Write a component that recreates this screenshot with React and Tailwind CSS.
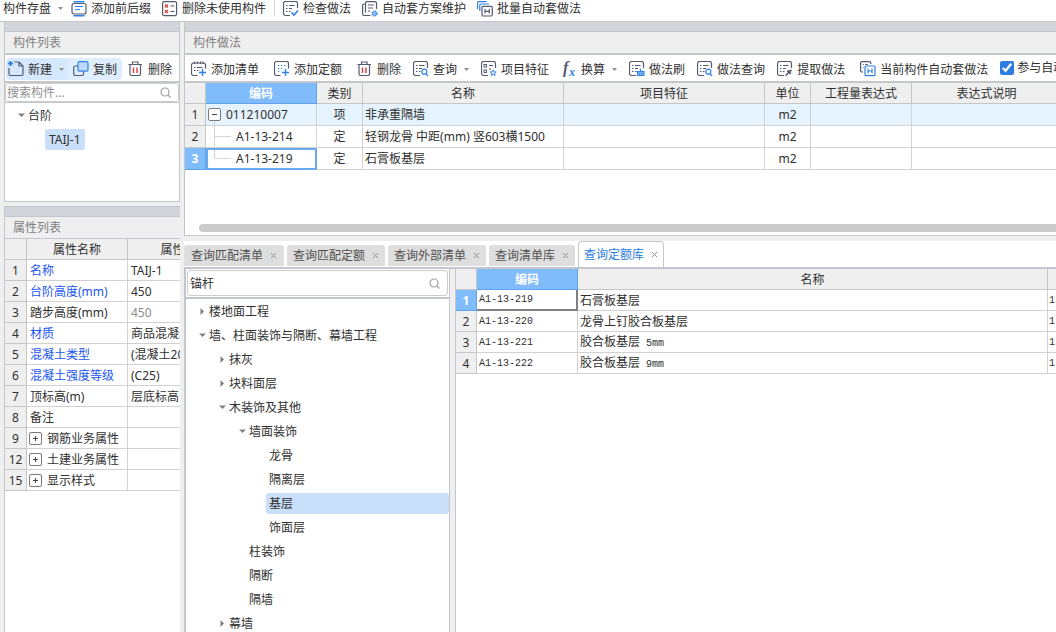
import React from 'react'
import clsx from 'clsx'

const DARK = '#555a70'
const BLUE = '#2f80e8'
const RED = '#e03a3a'

const Icon = ({ children }) => (
  <svg width="16" height="16" viewBox="0 0 16 16" fill="none" stroke={DARK} strokeWidth="1.2" className="shrink-0" aria-hidden="true">
    {children}
  </svg>
)

const sheet = 'M7 14.5H2.5a2 2 0 0 1-2-2V2.5a2 2 0 0 1 2-2h10a2 2 0 0 1 2 2V7'
const sheetLines = 'M3 4.5h1.500M6 4.5h5.500M3 7.5h1.500M6 7.5h3M3 10.5h1.500M6 10.5h1.500'

const icons = {
  affix: (
    <Icon>
      <path d="M3 2.500h10a2 2 0 0 1 2 2v6.500a2 2 0 0 1-2 2H3a2 2 0 0 1-2-2V4.500a2 2 0 0 1 2-2z" />
      <path d="M2.500 .700h11M2.500 14.800h11" stroke={BLUE} strokeWidth="1.400" />
      <path d="M4 5.500h8M4 8.500h5" stroke={BLUE} strokeWidth="1" />
    </Icon>
  ),
  unused: (
    <Icon>
      <rect x=".600" y=".600" width="14" height="14" rx="1.500" />
      <path d="M3 3.500l3 3m0-3l-3 3M3 9l3 3m0-3l-3 3" stroke={RED} />
      <path d="M8.500 5h4M8.500 10.500h4" />
    </Icon>
  ),
  check: (
    <Icon>
      <path d={sheet} />
      <path d={sheetLines} strokeWidth="1" />
      <path d="M8.500 11.500l2.500 2.500 4-4.500" stroke={BLUE} strokeWidth="1.600" />
    </Icon>
  ),
  scheme: (
    <Icon>
      <path d="M3.500 11.500V2A1.500 1.500 0 0 1 5 .600h8A1.500 1.500 0 0 1 14.500 2v6M3.500 3H2A1.500 1.500 0 0 0 .600 4.500V13A1.500 1.500 0 0 0 2 14.500h6.500" />
      <path d="M6 4h6M6 7h5M6 10h2" strokeWidth="1" />
      <circle cx="12.500" cy="12.500" r="2.500" fill="#8dbbf5" stroke={BLUE} strokeDasharray="1.200 .800" />
    </Icon>
  ),
  batch: (
    <Icon>
      <path d="M.600 8V2A1.300 1.300 0 0 1 1.900.700H9.500M2.800 10V4.300A1.300 1.300 0 0 1 4.100 3H12" stroke={BLUE} />
      <rect x="5" y="5.300" width="10.300" height="9.700" rx="1.200" />
      <path d="M8 8v4.500M12.300 8v4.500M8 10.300h4.300" />
    </Icon>
  ),
  create: (
    <Icon>
      <path d="M6.500 1H11l4 4v8a1.500 1.500 0 0 1-1.500 1.500h-11A1.500 1.500 0 0 1 1 13V7M11 1v4h4" />
      <path d="M.500 .500l4 4M4.500 .500l-4 4M2.500 0v5M0 2.500h5" stroke={BLUE} strokeWidth="1" />
    </Icon>
  ),
  copy: (
    <Icon>
      <path d="M5 5H2.200A1.500 1.500 0 0 0 .700 6.500V13A1.500 1.500 0 0 0 2.200 14.500H9A1.500 1.500 0 0 0 10.500 13V10.500" />
      <rect x="5" y=".700" width="10" height="9.500" rx="1.500" fill="#bcd8fb" stroke={BLUE} />
    </Icon>
  ),
  trash: (
    <Icon>
      <path d="M.500 3.500h13.500M4.500 3.500V1h5.500v2.500M2 3.500V13a1.500 1.500 0 0 0 1.500 1.500h7.500a1.500 1.500 0 0 0 1.500-1.500V3.500" />
      <path d="M5.500 6.500v5.500M9 6.500v5.500" stroke={RED} strokeWidth="1.400" />
    </Icon>
  ),
  addList: (
    <Icon>
      <path d="M6.500 14.500h-4a2 2 0 0 1-2-2V4a2 2 0 0 1 2-2h10a2 2 0 0 1 2 2v3.500M3.500 .500V3M6.500 .500V3M9.500 .500V3M12 .500V3" />
      <path d="M3 6.500h1.500M6 6.500h5.500M3 9.500h1.500M6 9.500h1.500" strokeWidth="1" />
      <path d="M11.500 8v7M8 11.500h7" stroke={BLUE} strokeWidth="1.400" />
    </Icon>
  ),
  addQuota: (
    <Icon>
      <path d="M6.500 14.500h-4a2 2 0 0 1-2-2V2.500a2 2 0 0 1 2-2h10a2 2 0 0 1 2 2v5" />
      <path d="M4 4.500h8M4 7.500h5M4 10.500h3" stroke={BLUE} strokeWidth="1.200" strokeDasharray="1.200 1.800" />
      <path d="M11.500 8v7M8 11.500h7" stroke={BLUE} strokeWidth="1.400" />
    </Icon>
  ),
  query: (
    <Icon>
      <path d={sheet} />
      <path d={sheetLines} strokeWidth="1" />
      <circle cx="11.300" cy="10.700" r="2.500" stroke={BLUE} />
      <path d="M13 12.700l2 2.300" stroke={BLUE} />
    </Icon>
  ),
  feature: (
    <Icon>
      <path d={sheet} />
      <path d="M8 4.500h4M8 8h2" strokeWidth="1" />
      <rect x="3" y="3.500" width="2.500" height="2.500" strokeWidth="1" />
      <rect x="3" y="9" width="2.500" height="2.500" strokeWidth="1" />
      <path d="M12.200 8.800l.900 1.900 2.100.300-1.500 1.400.400 2.100-1.900-1-1.900 1 .400-2.100-1.500-1.400 2.100-.300z" fill="#cfe3fb" stroke={BLUE} strokeWidth=".900" />
    </Icon>
  ),
  convert: (
    <svg width="16" height="16" viewBox="0 0 16 16" className="shrink-0 font-['Liberation_Serif',serif] font-bold italic" aria-hidden="true">
      <text x="2" y="12" fontSize="16" fill={DARK}>f</text>
      <text x="8" y="15" fontSize="12" fill={BLUE}>x</text>
    </svg>
  ),
  brush: (
    <Icon>
      <path d={sheet} />
      <path d={sheetLines} strokeWidth="1" />
      <path d="M8.500 14.500v-4h6.500v4zM11.700 7.500v3M10.700 12v2.500M12.800 12v2.500M8.500 12h6.500" fill="#cfe3fb" stroke={BLUE} strokeWidth="1.100" />
    </Icon>
  ),
  extract: (
    <Icon>
      <path d={sheet} />
      <path d={sheetLines} strokeWidth="1" />
      <path d="M8.500 14.700l3.500-3.500" strokeWidth="1.400" />
      <path d="M10.500 9.500l3.200 3.200M12.300 10.900l2-2" strokeWidth="2" />
    </Icon>
  ),
  auto: (
    <Icon>
      <path d="M3 11H1.900A1.300 1.300 0 0 1 .600 9.700V2A1.300 1.300 0 0 1 1.900.700H9.500A1.300 1.300 0 0 1 10.800 2v1M2.800 3.500h1M5.300 3.500h2.500M2.800 6.500h.800" />
      <rect x="5" y="5" width="10" height="9.700" rx="1.300" stroke={BLUE} />
      <path d="M8 7.500v4.700M12 7.500v4.700M8 10h4" stroke={BLUE} />
    </Icon>
  ),
}

const Magnifier = () => (
  <svg width="11" height="11" viewBox="0 0 11 11" fill="none" stroke="#a0a0a0" strokeWidth="1.200" className="shrink-0" aria-hidden="true">
    <circle cx="5" cy="5" r="4" />
    <path d="M8 8l2.500 2.500" />
  </svg>
)

const Caret = ({ open = true }) => (
  <svg width="7" height="7" viewBox="0 0 7 7" fill="#808080" className="shrink-0" aria-hidden="true">
    <path d={open ? 'M0 1.500h7L3.500 5z' : 'M1.500 0v7L5 3.500z'} />
  </svg>
)

const MenuArrow = () => (
  <svg width="5" height="3" viewBox="0 0 5 3" fill="#8c8c8c" className="ml-[7px] shrink-0" aria-hidden="true">
    <path d="M0 0h5L2.500 3z" />
  </svg>
)

const ToolButton = ({ icon, label, menu, className }) => (
  <button type="button" className={clsx('flex shrink-0 items-center whitespace-nowrap', className)}>
    {icon && icons[icon]}
    <span className={clsx(icon && 'ml-1')}>{label}</span>
    {menu && <MenuArrow />}
  </button>
)

const PanelTitle = ({ children, thin }) => (
  <>
    <div className="h-[10px] shrink-0 border-b border-[#c3c6cc] bg-[#d4d5da]" />
    <h2
      className={clsx(
        'flex shrink-0 items-center border-[#c3c6cc] bg-[#efefef] pl-2 text-[#808080]',
        thin ? 'h-[22px] border-b' : 'h-[23px] border-b-2'
      )}
    >
      {children}
    </h2>
  </>
)

const ExpandBox = ({ open }) => (
  <svg width="13" height="13" viewBox="0 0 13 13" fill="#fff" stroke="#7a7a7a" className="shrink-0" aria-hidden="true">
    <rect x=".500" y=".500" width="12" height="12" rx="1.500" />
    <path d={open ? 'M4 6.500h5' : 'M4 6.500h5M6.500 4v5'} stroke="#444" />
  </svg>
)

const methodTools = [
  { icon: 'addList', label: '添加清单', wide: true },
  { icon: 'addQuota', label: '添加定额', wide: true },
  { icon: 'trash', label: '删除' },
  { icon: 'query', label: '查询', menu: true },
  { icon: 'feature', label: '项目特征' },
  { icon: 'convert', label: '换算', menu: true },
  { icon: 'brush', label: '做法刷' },
  { icon: 'query', label: '做法查询' },
  { icon: 'extract', label: '提取做法', wide: true },
  { icon: 'auto', label: '当前构件自动套做法' },
]

const properties = [
  { no: 1, name: '名称', value: 'TAIJ-1', link: true },
  { no: 2, name: '台阶高度(mm)', value: '450', link: true },
  { no: 3, name: '踏步高度(mm)', value: '450', muted: true },
  { no: 4, name: '材质', value: '商品混凝土', link: true },
  { no: 5, name: '混凝土类型', value: '(混凝土20石)', link: true },
  { no: 6, name: '混凝土强度等级', value: '(C25)', link: true },
  { no: 7, name: '顶标高(m)', value: '层底标高' },
  { no: 8, name: '备注', value: '' },
  { no: 9, name: '钢筋业务属性', value: '', group: true },
  { no: 12, name: '土建业务属性', value: '', group: true },
  { no: 15, name: '显示样式', value: '', group: true },
]

const methods = [
  { no: 1, code: '011210007', type: '项', name: '非承重隔墙', unit: 'm2' },
  { no: 2, code: 'A1-13-214', type: '定', name: '轻钢龙骨 中距(mm) 竖603横1500', unit: 'm2' },
  { no: 3, code: 'A1-13-219', type: '定', name: '石膏板基层', unit: 'm2' },
]

const tabs = ['查询匹配清单', '查询匹配定额', '查询外部清单', '查询清单库', '查询定额库']

const chapters = [
  { label: '楼地面工程', level: 0, open: false },
  { label: '墙、柱面装饰与隔断、幕墙工程', level: 0, open: true },
  { label: '抹灰', level: 1, open: false },
  { label: '块料面层', level: 1, open: false },
  { label: '木装饰及其他', level: 1, open: true },
  { label: '墙面装饰', level: 2, open: true },
  { label: '龙骨', level: 3 },
  { label: '隔离层', level: 3 },
  { label: '基层', level: 3, selected: true },
  { label: '饰面层', level: 3 },
  { label: '柱装饰', level: 2 },
  { label: '隔断', level: 2 },
  { label: '隔墙', level: 2 },
  { label: '幕墙', level: 1, open: false },
]

const indents = ['pl-3', 'pl-8', 'pl-[52px]', 'pl-[72px]']

const quotas = [
  { code: 'A1-13-219', name: '石膏板基层' },
  { code: 'A1-13-220', name: '龙骨上钉胶合板基层' },
  { code: 'A1-13-221', name: '胶合板基层', size: '5mm' },
  { code: 'A1-13-222', name: '胶合板基层', size: '9mm' },
]

const headCell = 'border-r border-b border-[#c6c6c6] bg-[#efefef] p-0 font-normal'
const bodyCell = 'border-r border-b border-[#d2d2d2] p-0'
const tableBase = 'table-fixed border-separate border-spacing-0 whitespace-nowrap'
const mono = "font-['Liberation_Mono','Noto_Sans_CJK_SC',monospace] text-[10px]"

const TopToolbar = () => (
  <header className="flex h-[22px] shrink-0 items-start gap-[11px] overflow-hidden border-b border-[#c3c6cc] bg-white pl-[3px]">
    <ToolButton label="构件存盘" menu className="-mr-[3px]" />
    <ToolButton icon="affix" label="添加前后缀" />
    <ToolButton icon="unused" label="删除未使用构件" />
    <div className="-mx-[3px] h-4 w-px shrink-0 bg-[#d8d8d8]" />
    <ToolButton icon="check" label="检查做法" />
    <ToolButton icon="scheme" label="自动套方案维护" />
    <ToolButton icon="batch" label="批量自动套做法" />
  </header>
)

const ComponentPanel = () => (
  <section className="flex h-[180px] shrink-0 flex-col border-x border-b border-[#c3c6cc] bg-white">
    <PanelTitle>构件列表</PanelTitle>
    <div className="flex h-7 shrink-0 items-center border-b-2 border-[#c3c6cc] pt-[2px] pl-px">
      <ToolButton icon="create" label="新建" menu className="h-[22px] rounded-l-sm bg-[#d6e8fd] pr-1 pl-[2px]" />
      <ToolButton icon="copy" label="复制" className="h-[22px] rounded-r-sm bg-[#dfeefe] pr-[5px] pl-[5px]" />
      <ToolButton icon="trash" label="删除" className="ml-[6px]" />
    </div>
    <div className="h-5 shrink-0 border-b border-[#c3c6cc]">
      <label className="flex h-[19px] items-center rounded-[3px] border border-[#cdcdcd] pr-[7px]">
        <input type="text" aria-label="搜索构件" placeholder="搜索构件..." className="min-w-0 flex-1 pl-px outline-none placeholder:text-[#909090]" />
        <Magnifier />
      </label>
    </div>
    <ul>
      <li className="flex h-6 items-center gap-[3px] pl-[13px]"><Caret />台阶</li>
      <li className="flex h-6 items-center pl-10">
        <span className="rounded-[3px] bg-[#c9dffa] px-1 leading-[21px]">TAIJ-1</span>
      </li>
    </ul>
  </section>
)

const PropertyPanel = () => (
  <section className="flex min-h-0 flex-1 flex-col overflow-hidden border-t border-l border-[#c3c6cc] bg-white">
    <PanelTitle thin>属性列表</PanelTitle>
    <table className={clsx(tableBase, 'w-[225px]')}>
      <colgroup>
        <col className="w-[22px]" />
        <col className="w-[101px]" />
        <col className="w-[102px]" />
      </colgroup>
      <thead>
        <tr className="h-[21px]">
          <th className={headCell} aria-label="序号" />
          <th className={headCell}>属性名称</th>
          <th className={headCell}>属性值</th>
        </tr>
      </thead>
      <tbody>
        {properties.map((row) => (
          <tr key={row.no} className="h-[21px]">
            <td className={clsx(headCell, 'text-center')}>{row.no}</td>
            <td className={clsx(bodyCell, 'pl-[2px]', row.link && 'text-[#1a56f0]')}>
              {row.group ? <span className="flex items-center gap-[5px]"><ExpandBox />{row.name}</span> : <span className="pl-px">{row.name}</span>}
            </td>
            <td className={clsx(bodyCell, 'pl-[3px]', row.muted && 'text-[#8c8c8c]')}>{row.value}</td>
          </tr>
        ))}
      </tbody>
    </table>
  </section>
)

const CodeMark = ({ no }) => {
  if (no === 1) {
    return (
      <svg width="14" height="21" viewBox="0 0 14 21" fill="#fff" className="shrink-0" aria-hidden="true">
        <path d="M6.500 17v4" stroke="#d5d5d5" />
        <rect x=".500" y="4.500" width="12" height="12" rx="1.500" stroke="#7a7a7a" />
        <path d="M4 10.500h5" stroke="#444" />
      </svg>
    )
  }
  return (
    <svg width="24" height="21" viewBox="0 0 24 21" fill="none" stroke="#d5d5d5" className="shrink-0" aria-hidden="true">
      <path d={no === 2 ? 'M6.500 0v21M6.500 10.500H23' : 'M6.500 0v10.500H23'} />
    </svg>
  )
}

const MethodPanel = () => (
  <section className="flex shrink-0 flex-col overflow-hidden border-b border-l border-[#c3c6cc] bg-white">
    <PanelTitle>构件做法</PanelTitle>
    <div className="flex h-7 shrink-0 items-center gap-3 border-b-2 border-[#c3c6cc] pt-[2px] pl-[6px]">
      {methodTools.map((tool) => (
        <ToolButton key={tool.label} icon={tool.icon} label={tool.label} menu={tool.menu} className={clsx(tool.wide && 'mr-[3px]')} />
      ))}
      <label className="flex shrink-0 items-center gap-[3px] whitespace-nowrap pb-[3px]">
        <input type="checkbox" defaultChecked className="size-[14px] accent-[#2b7de1]" />
        参与自动套
      </label>
    </div>
    <table className={clsx(tableBase, 'w-[877px] min-w-full')}>
      <colgroup>
        <col className="w-[21px]" />
        <col className="w-[111px]" />
        <col className="w-[46px]" />
        <col className="w-[201px]" />
        <col className="w-[201px]" />
        <col className="w-[46px]" />
        <col className="w-[101px]" />
        <col />
      </colgroup>
      <thead>
        <tr className="h-[21px]">
          <th className={headCell} aria-label="序号" />
          <th className="border border-t-0 border-l-0 border-[#5fa3ec] bg-[#80bbfb] p-0 font-bold text-white">编码</th>
          <th className={headCell}>类别</th>
          <th className={headCell}>名称</th>
          <th className={headCell}>项目特征</th>
          <th className={headCell}>单位</th>
          <th className={headCell}>工程量表达式</th>
          <th className={headCell}>表达式说明</th>
        </tr>
      </thead>
      <tbody>
        {methods.map((row) => {
          const active = row.no === 3
          return (
            <tr key={row.no} className={clsx('h-[22px]', row.no === 1 && 'bg-[#e5f3ff]')}>
              <td
                className={clsx(
                  'border-r border-b p-0 text-center',
                  active ? 'border-[#5fa3ec] bg-[#80bbfb] font-bold text-white' : 'border-[#c6c6c6] bg-[#efefef]'
                )}
              >
                {row.no}
              </td>
              <td className={clsx(bodyCell, active && 'outline-2 -outline-offset-2 outline-[#69a9ec]')}>
                <span className="flex items-center gap-1 pl-[2px]">
                  <CodeMark no={row.no} />
                  {row.code}
                </span>
              </td>
              <td className={clsx(bodyCell, 'text-center')}>{row.type}</td>
              <td className={clsx(bodyCell, 'pl-[2px]')}>{row.name}</td>
              <td className={bodyCell} />
              <td className={clsx(bodyCell, 'text-center')}>{row.unit}</td>
              <td className={bodyCell} />
              <td className={bodyCell} />
            </tr>
          )
        })}
      </tbody>
    </table>
    <div className="mt-[54px] mb-[3px] ml-[14px] h-2 rounded-l-full bg-[#cbcbcb]" />
  </section>
)

const QueryTabs = () => (
  <nav className="mt-[5px] flex h-7 shrink-0 items-end gap-[3px] border-b-2 border-[#c3c6cc] bg-white">
    {tabs.map((tab) => {
      const active = tab === '查询定额库'
      return (
        <button
          key={tab}
          type="button"
          className={clsx(
            'flex items-center gap-[7px] whitespace-nowrap first:px-[7px]',
            active
              ? 'h-[26px] rounded-t-[4px] border border-b-0 border-[#c3c6cc] px-[5px] text-[#2b7de1]'
              : 'mb-px h-[21px] rounded-t-[3px] bg-[#dedede] px-[6px] text-[#505050]'
          )}
        >
          {tab}
          <svg width="7" height="7" viewBox="0 0 7 7" stroke="#8f8f8f" aria-hidden="true">
            <path d="M1 1l5 5M6 1L1 6" />
          </svg>
        </button>
      )
    })}
  </nav>
)

const ChapterTree = () => (
  <aside className="flex w-[266px] shrink-0 flex-col border-r border-l-2 border-[#c3c6cc] bg-white">
    <div className="h-[30px] shrink-0 border-b-2 border-[#c3c6cc] p-px">
      <label className="flex h-[26px] items-center rounded-[3px] border border-[#cdcdcd] pr-[7px]">
        <input type="text" aria-label="查询" defaultValue="锚杆" className="min-w-0 flex-1 pl-[2px] outline-none" />
        <Magnifier />
      </label>
    </div>
    <ul>
      {chapters.map((item) => (
        <li key={item.label} className={clsx('flex h-6 items-center', indents[item.level])}>
          <span className="flex w-2 shrink-0 justify-center">
            {item.open !== undefined && <Caret open={item.open} />}
          </span>
          <span className={clsx('whitespace-nowrap px-[3px] leading-[21px]', item.selected && 'flex-1 rounded-[3px] bg-[#c9dffa]')}>
            {item.label}
          </span>
        </li>
      ))}
    </ul>
  </aside>
)

const QuotaTable = () => (
  <div className="min-w-0 flex-1 overflow-hidden border-l border-[#c3c6cc] bg-white">
    <table className={clsx(tableBase, 'w-full')}>
      <colgroup>
        <col className="w-[21px]" />
        <col className="w-[101px]" />
        <col />
        <col className="w-2" />
      </colgroup>
      <thead>
        <tr className="h-[21px]">
          <th className={headCell} aria-label="序号" />
          <th className="border border-t-0 border-l-0 border-[#5fa3ec] bg-[#80bbfb] p-0 font-bold text-white">编码</th>
          <th className={headCell}>名称</th>
          <th className="border-b border-[#c6c6c6] bg-[#efefef] p-0" aria-label="单位" />
        </tr>
      </thead>
      <tbody>
        {quotas.map((row, index) => (
          <tr key={row.code} className="h-[21px]">
            <td
              className={clsx(
                'border-r border-b p-0 text-center',
                index === 0 ? 'border-[#5fa3ec] bg-[#80bbfb] font-bold text-white' : 'border-[#c6c6c6] bg-[#efefef]'
              )}
            >
              {index + 1}
            </td>
            <td
              className={clsx(
                mono,
                'p-0 pl-[2px]',
                index === 0 ? 'border-r-2 border-b-2 border-[#808080]' : 'border-r border-b border-[#d2d2d2]'
              )}
            >
              {row.code}
            </td>
            <td className={clsx(bodyCell, 'pl-[2px]')}>
              {row.name}
              {row.size && <span className={clsx(mono, 'ml-[6px]')}>{row.size}</span>}
            </td>
            <td className={clsx(mono, 'overflow-hidden border-b border-[#d2d2d2] p-0 pl-px')}>1</td>
          </tr>
        ))}
      </tbody>
    </table>
  </div>
)

const App = () => (
  <div className="flex h-screen flex-col overflow-hidden bg-[#efefef] font-['Noto_Sans','Noto_Sans_CJK_SC',sans-serif] text-[12px] leading-[17px] text-[#303030]">
    <TopToolbar />
    <main className="flex min-h-0 flex-1 gap-1 pl-1">
      <div className="flex w-44 shrink-0 flex-col gap-1">
        <ComponentPanel />
        <PropertyPanel />
      </div>
      <div className="flex min-w-0 flex-1 flex-col">
        <MethodPanel />
        <QueryTabs />
        <div className="flex min-h-0 flex-1 gap-[5px]">
          <ChapterTree />
          <QuotaTable />
        </div>
      </div>
    </main>
  </div>
)

export default App
